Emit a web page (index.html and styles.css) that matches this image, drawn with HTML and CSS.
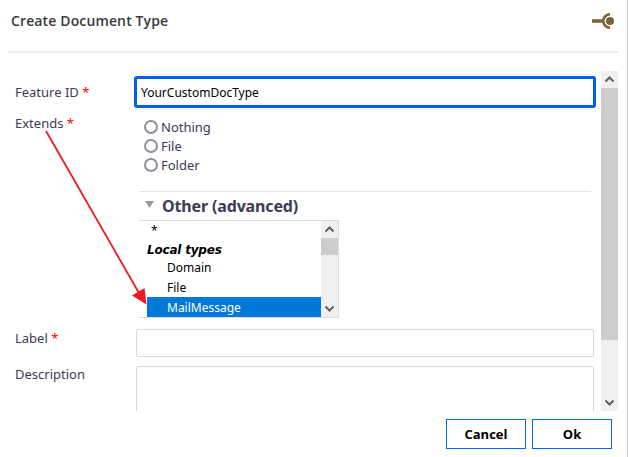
FILE: index.html
```html
<!DOCTYPE html>
<html lang="en">
<head>
<meta charset="utf-8">
<title>Create Document Type</title>
<link rel="stylesheet" href="styles.css">
</head>
<body>
<main class="dialog">
  <header class="head">
    <h1>Create Document Type</h1>
    <svg class="logo" width="22" height="16" viewBox="0 0 22 16"><path d="M0 8h11" stroke="#988562" stroke-width="4"/><path d="M0 8h11" stroke="#7b6237" stroke-width="2"/><path d="M18 1.300a6.700 6.700 0 0 0 0 13.400" fill="none" stroke="#7b6237" stroke-width="2.600"/><circle cx="18" cy="8" r="4" fill="#7b6237"/></svg>
  </header>
  <div class="scroll">
    <form class="form">
      <div class="row feature"><label>Feature ID <b>*</b></label><div class="field focus"><span class="value">YourCustomDocType</span></div></div>
      <div class="row extends">
        <label>Extends <b>*</b></label>
        <div class="choices">
          <div class="radio"><i></i><span>Nothing</span></div>
          <div class="radio"><i></i><span>File</span></div>
          <div class="radio"><i></i><span>Folder</span></div>
          <div class="other"><svg width="9" height="7"><path d="M0 0h9L4.5 7z" fill="#999"/></svg><h2>Other (advanced)</h2></div>
          <div class="list">
            <div class="options">
              <div class="star"><span>*</span></div>
              <div class="group"><span>Local types</span></div>
              <div class="opt"><span class="domain">Domain</span></div>
              <div class="opt"><span class="file">File</span></div>
              <div class="opt selected"><span class="mail">MailMessage</span></div>
            </div>
            <div class="bar small"><svg width="17" height="17"><path d="M4.5 10.5l4-4 4 4"/></svg><div class="thumb"></div><svg width="17" height="17"><path d="M4.5 6.5l4 4 4-4"/></svg></div>
          </div>
        </div>
      </div>
      <div class="row label"><label>Label <b>*</b></label><div class="field"></div></div>
      <div class="row desc"><label>Description</label><div class="field area"></div></div>
    </form>
    <div class="bar"><svg width="17" height="17"><path d="M4.5 10.5l4-4 4 4"/></svg><div class="thumb"></div><svg width="17" height="17"><path d="M4.5 6.500l4 4 4-4"/></svg></div>
  </div>
  <footer class="actions"><button type="button"><span class="cancel">Cancel</span></button><button type="button"><span>Ok</span></button></footer>
  <svg class="arrow" width="628" height="457"><path d="M46 131L139 293" stroke="#ed1c24" stroke-width="1.8"/><path d="M146.500 304.500L132 295.500L144.500 288z" fill="#ed1c24"/></svg>
</main>
</body>
</html>
```
FILE: styles.css
```css
* { box-sizing: border-box; }
body { margin: 0; background: #fff; font: 13px/18px "Noto Sans", sans-serif; color: #3d3a56; }
.dialog { position: relative; width: 628px; height: 457px; border-right: 1px solid #ccc; padding: 0 9px 0 8px; overflow: hidden; }
.head { height: 53px; border-bottom: 2px solid #ebebeb; display: flex; justify-content: space-between; padding: 11px 4px 0 3px; }
h1 { margin: 0; font: 600 14px/20px "Open Sans", sans-serif; letter-spacing: .13px; color: #3a3a3a; }
.logo { margin-top: 2px; }
.scroll { margin-top: 18px; height: 340px; display: flex; overflow: hidden; }
.form { width: 593px; padding: 5px 5px 0 7px; }
.row { display: flex; }
.row label { width: 121px; flex: none; white-space: nowrap; }
.row b { color: #f00; font-weight: 400; }
.feature { height: 38px; }
.feature label { padding-top: 7px; margin-right: -2px; }
.field { width: 458px; height: 28px; border: 1px solid #d9d9d9; border-radius: 2px; flex: none; }
.focus { width: 462px; height: 32px; border: 3px solid #0060e6; border-radius: 3px; padding: 5px 0 0 4px; }
.value, .opt { font-family: "Noto Sans", sans-serif; font-size: 12px; color: #000; }
.value { display: block; }
.extends { height: 215px; }
.choices { margin-left: 3px; padding-top: 3px; width: 452px; }
.radio { display: flex; align-items: center; height: 19px; padding-left: 5px; gap: 3px; }
.radio i { width: 14px; height: 14px; border: 2px solid #918f9f; border-radius: 50%; }
.other { margin-top: 17px; height: 29px; border-top: 1px solid #e6e6e6; display: flex; padding: 2px 0 0 6px; gap: 8px; }
.other svg { margin-top: 7px; }
h2 { margin: 0; font: 700 16px/24px "Noto Sans", sans-serif; letter-spacing: -.15px; }
.list { width: 200px; height: 98px; border: 1px solid #ddd; border-left: 0; display: flex; }
.options { flex: 1; padding-left: 8px; color: #000; font-size: 12px; }
.star { height: 18px; padding-left: 4px; line-height: 20px; }
.group { height: 18px; font: italic bold 12px/22px "DejaVu Sans", sans-serif; letter-spacing: -.2px; }
.opt { height: 20px; line-height: 22px; padding-left: 20px; }
.selected { background: #0078d7; color: #fff; }
.bar { width: 17px; flex: none; background: #f0f0f0; display: flex; flex-direction: column; }
.bar svg { display: block; flex: none; }
.bar path { fill: none; stroke: #606060; stroke-width: 2; }
.thumb { height: 252px; background: #cdcdcd; margin-bottom: auto; }
.small .thumb { height: 17px; }
.label { height: 37px; }
.desc label { margin-top: -1px; }
.desc .area { height: 80px; }
.actions { height: 38px; display: flex; justify-content: flex-end; gap: 6px; padding: 8px 6px 0 0; }
button { width: 80px; height: 30px; flex: none; border: 1px solid #0066ff; background: #fff; padding: 0; font: 700 13px/18px "Open Sans", sans-serif; color: #000; }
.arrow { position: absolute; left: 0; top: 0; pointer-events: none; }
```
